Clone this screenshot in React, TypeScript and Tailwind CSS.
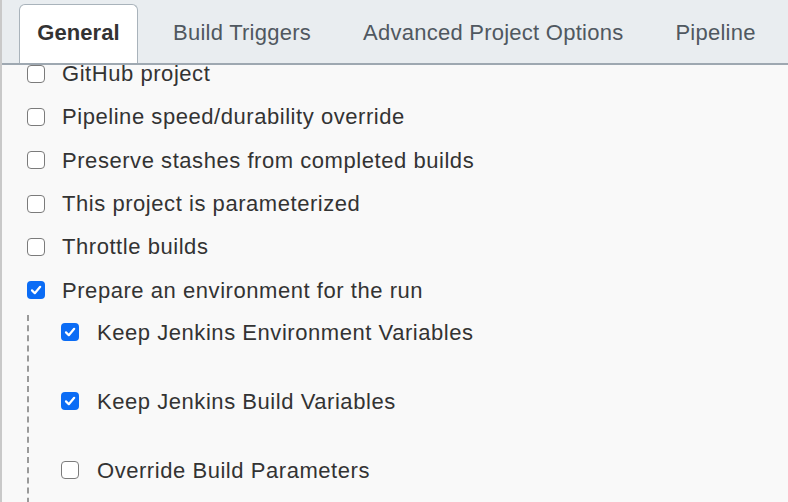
import React from "react";

type Item = { label: string; checked?: boolean };

const topItems: Item[] = [
  { label: "GitHub project" },
  { label: "Pipeline speed/durability override" },
  { label: "Preserve stashes from completed builds" },
  { label: "This project is parameterized" },
  { label: "Throttle builds" },
  { label: "Prepare an environment for the run", checked: true },
];

const subItems: Item[] = [
  { label: "Keep Jenkins Environment Variables", checked: true },
  { label: "Keep Jenkins Build Variables", checked: true },
  { label: "Override Build Parameters" },
];

function Checkbox({ checked }: { checked?: boolean }) {
  if (checked) {
    return (
      <span className="flex h-[18px] w-[18px] shrink-0 items-center justify-center rounded-[4px] bg-[#0b6cf5]">
        <svg width="12" height="12" viewBox="0 0 12 12" fill="none">
          <path
            d="M2 6.4 4.8 9.2 10.2 2.8"
            stroke="white"
            strokeWidth="2.2"
            strokeLinecap="round"
            strokeLinejoin="round"
          />
        </svg>
      </span>
    );
  }
  return (
    <span className="block h-[18px] w-[18px] shrink-0 rounded-[4px] border-[1.5px] border-[#7b7b7b] bg-white" />
  );
}

export default function App() {
  const tabs = ["Build Triggers", "Advanced Project Options", "Pipeline"];

  return (
    <div
      className="flex h-[502px] w-[788px] flex-col overflow-hidden border-l-2 border-[#c9c9c9] bg-[#f9f9f9]"
      style={{ fontFamily: '"Liberation Sans", Arial, sans-serif' }}
    >
      {/* tab bar */}
      <div className="flex h-[65px] shrink-0 items-end border-b-2 border-[#9ea8b1] bg-[#e9edf0] text-[22px] tracking-[0.25px]">
        <div className="ml-[17px] flex h-[59px] w-[119px] items-center justify-center rounded-t-[6px] border border-b-0 border-[#a9b3bb] bg-white pb-[3px] font-bold tracking-[0.1px] text-[#333]">
          General
        </div>
        <div className="ml-[9px] flex h-[59px] items-center">
          {tabs.map((t) => (
            <div key={t} className="px-[26px] pb-[3px] text-[#505860]">
              {t}
            </div>
          ))}
        </div>
      </div>

      {/* scrolled content */}
      <div className="flex-1 overflow-hidden text-[22px] tracking-[0.55px] text-[#333]">
        <div className="-mt-[13px]">
          {topItems.map((item) => (
            <div key={item.label} className="flex h-[43.3px] items-center pl-[25px]">
              <Checkbox checked={item.checked} />
              <span className="ml-[17px]">{item.label}</span>
            </div>
          ))}
          <div className="ml-[25px] mt-[3px] border-l-2 border-dashed border-[#9a9a9a] pt-[2px]">
            {subItems.map((item) => (
              <div key={item.label} className="flex h-[69px] items-start pl-[32px] pt-[4px]">
                <div className="flex h-[23px] items-center">
                  <Checkbox checked={item.checked} />
                  <span className="ml-[18px]">{item.label}</span>
                </div>
              </div>
            ))}
          </div>
        </div>
      </div>
    </div>
  );
}
